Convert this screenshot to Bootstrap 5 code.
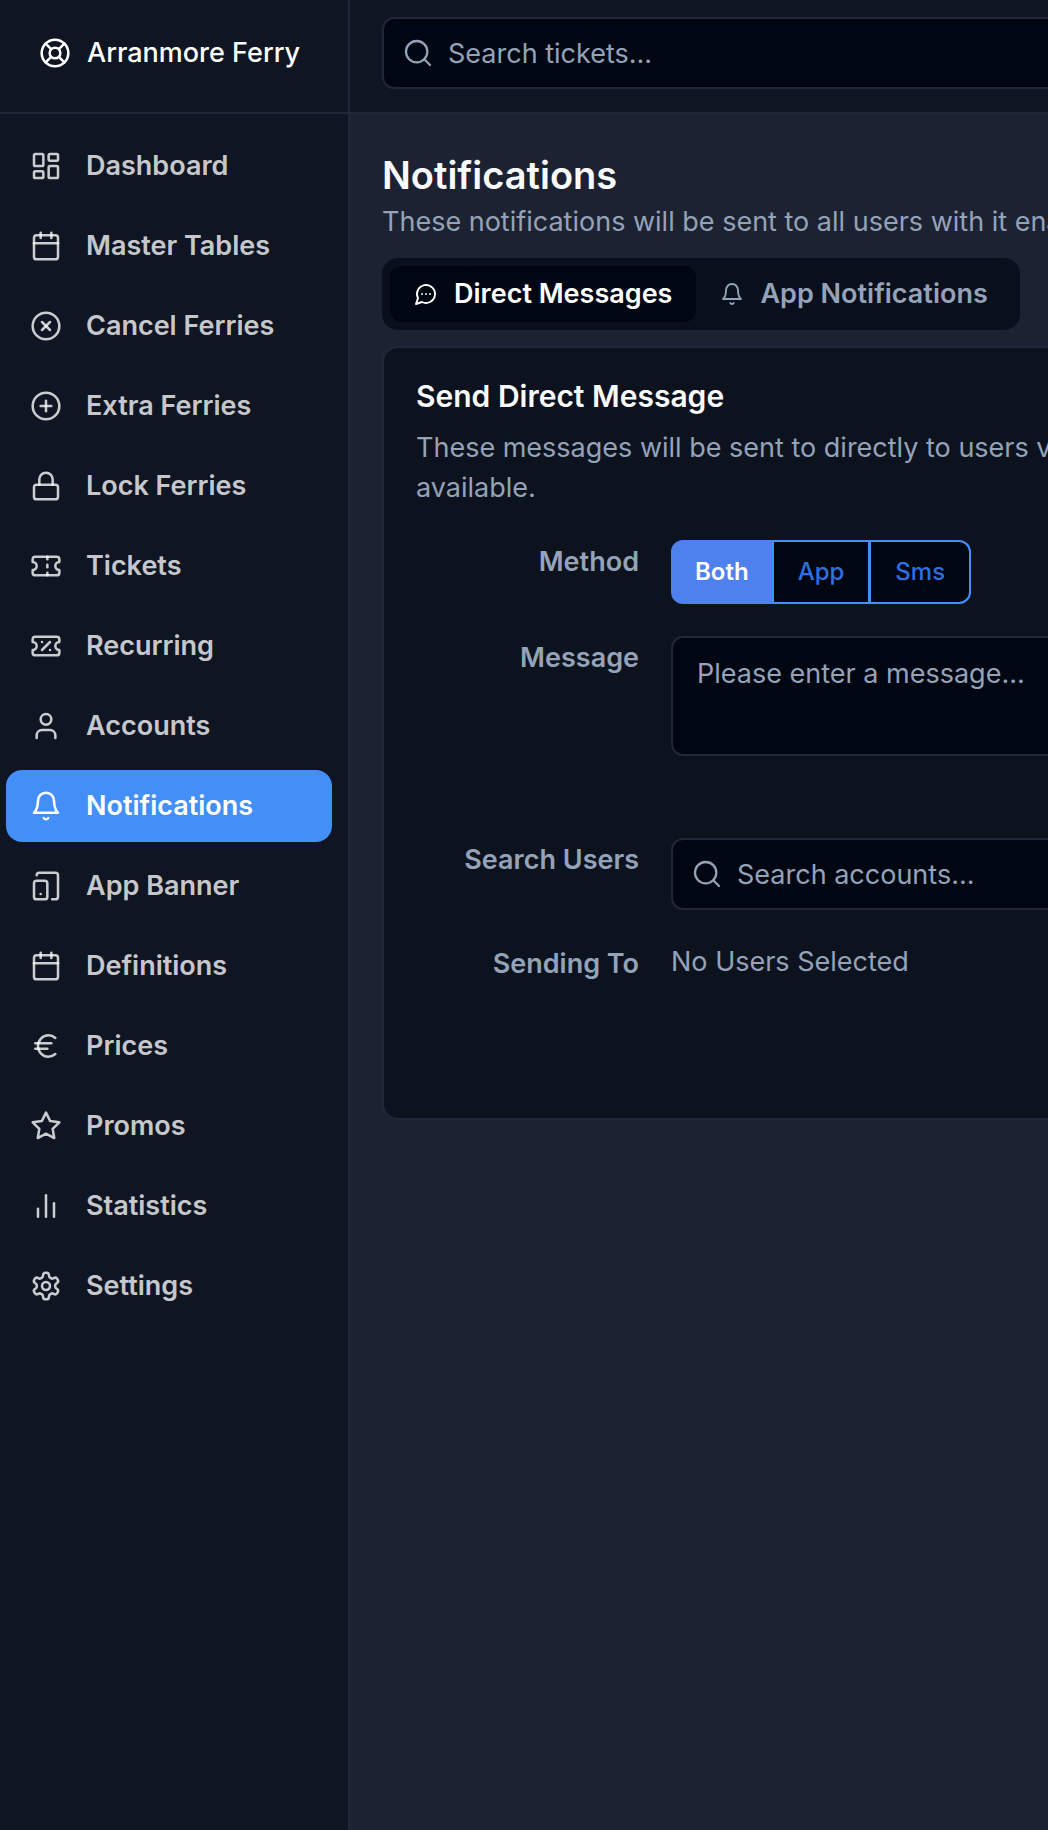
<!DOCTYPE html>
<html lang="en">
<head>
<meta charset="utf-8">
<meta name="viewport" content="width=device-width, initial-scale=1">
<title>Notifications - Arranmore Ferry</title>
<link href="https://cdn.jsdelivr.net/npm/bootstrap@5.3.0/dist/css/bootstrap.min.css" rel="stylesheet">
<style>
  :root {
    --panel: #0f1523;
    --field: #010613;
    --line: #1e2838;
    --muted: #94a3b8;
    --accent: #448ef7;
  }
  body {
    background: #1c2231;
    color: #f8fafc;
    font-family: Inter, "Liberation Sans", sans-serif;
    font-size: 27px;
    line-height: 40px;
    overflow-x: hidden;
  }
  .ico { width: 32px; height: 32px; flex: none; fill: none; stroke: currentColor; stroke-width: 1.9; stroke-linecap: round; stroke-linejoin: round; }
  .ico-sm { width: 24px; height: 24px; }

  .side { width: 350px; background: var(--panel); border-right: 2px solid var(--line); }
  .side-brand, .topbar { height: 114px; border-bottom: 2px solid var(--line); }
  .side-brand { padding: 0 39px 6px; gap: 16px; color: #fff; font-weight: 500; text-decoration: none; white-space: nowrap; }
  .side-nav { padding: 16px 16px 16px 6px; gap: 8px; }
  .side-nav .nav-link { height: 72px; padding: 0 24px; gap: 24px; border-radius: 16px; color: rgba(250, 250, 250, .8); font-weight: 600; }
  .side-nav .nav-link.active { background: var(--accent); color: #fff; }

  .content { min-width: 0; overflow: hidden; }
  .topbar { background: var(--panel); padding: 17px 0 0 32px; }
  .wide { min-width: 1100px; }
  .search { height: 72px; padding: 0 18px; gap: 14px; background: var(--field); border: 2px solid var(--line); border-radius: 12px; color: var(--muted); }
  .search .ico { stroke-width: 1.7; }
  .search input { background: transparent; border: 0; outline: 0; padding: 2px 0 0; color: #f8fafc; }
  .search input::placeholder, .msg::placeholder { color: var(--muted); opacity: 1; }

  .page { padding: 40px 0 32px 32px; }
  .page h1 { font-size: 38px; line-height: 42px; font-weight: 600; margin-bottom: 6px; }
  .soft { color: var(--muted); }

  .tabs { height: 72px; padding: 8px; border-radius: 16px; background: #090f1c; }
  .tabs .nav-link { height: 56px; padding: 0 24px; gap: 16px; border: 0; background: transparent; border-radius: 12px; color: var(--muted); font-weight: 600; white-space: nowrap; }
  .tabs .nav-link.active { background: var(--field); color: #fff; }

  .panel { background: #0d121f; border: 2px solid var(--line); border-radius: 16px; padding: 32px; }
  .panel h2 { font-size: 30px; line-height: 32px; font-weight: 600; }
  .panel .intro { margin-bottom: 32px; }
  .fields { gap: 32px; }
  .field-name { width: 255px; flex: none; padding: 8px 32px 0 0; line-height: 28px; font-weight: 600; text-align: right; color: var(--muted); }
  .row-msg { min-height: 170px; }
  .row-to { min-height: 144px; }
  .msg { height: 120px; padding: 16px 24px; background: var(--field); border: 2px solid var(--line); border-radius: 12px; color: #f8fafc; resize: none; }
  .methods .btn {
    --bs-btn-color: #2f6fe4; --bs-btn-bg: var(--field); --bs-btn-border-color: #4590f8;
    --bs-btn-active-bg: #4f81ee; --bs-btn-active-border-color: #4f81ee; --bs-btn-active-color: #fff;
    --bs-btn-font-size: 24px; --bs-btn-font-weight: 500; --bs-btn-line-height: 28px;
    --bs-btn-padding-x: 24px; --bs-btn-padding-y: 16px; --bs-btn-border-width: 2px; --bs-btn-border-radius: 12px;
  }
  .methods .btn.active { padding-left: 22px; padding-right: 22px; font-weight: 600; z-index: 0; }
  .methods .btn + .btn { margin-left: -2px; }
</style>
<script src="https://cdn.jsdelivr.net/npm/bootstrap@5.3.0/dist/js/bootstrap.bundle.min.js"></script>
</head>
<body>
<div class="d-flex min-vh-100">
  <aside class="side d-flex flex-column flex-shrink-0">
    <a href="#" class="side-brand d-flex align-items-center">
      <svg class="ico" viewBox="0 0 24 24"><circle cx="12" cy="12" r="10"/><path d="m4.93 4.93 4.24 4.24M14.83 9.17l4.24-4.24M14.83 14.83l4.24 4.24M9.17 14.83l-4.24 4.24"/><circle cx="12" cy="12" r="4"/></svg>
      <span>Arranmore Ferry</span>
    </a>
    <nav class="side-nav nav flex-column flex-nowrap">
      <a href="#" class="nav-link d-flex align-items-center"><svg class="ico" viewBox="0 0 24 24"><rect x="3" y="3" width="7" height="9" rx="1"/><rect x="14" y="3" width="7" height="5" rx="1"/><rect x="14" y="12" width="7" height="9" rx="1"/><rect x="3" y="16" width="7" height="5" rx="1"/></svg>Dashboard</a>
      <a href="#" class="nav-link d-flex align-items-center"><svg class="ico" viewBox="0 0 24 24"><rect x="3" y="4" width="18" height="18" rx="2"/><path d="M16 2v4"/><path d="M8 2v4"/><path d="M3 10h18"/></svg>Master Tables</a>
      <a href="#" class="nav-link d-flex align-items-center"><svg class="ico" viewBox="0 0 24 24"><circle cx="12" cy="12" r="10"/><path d="m15 9-6 6"/><path d="m9 9 6 6"/></svg>Cancel Ferries</a>
      <a href="#" class="nav-link d-flex align-items-center"><svg class="ico" viewBox="0 0 24 24"><circle cx="12" cy="12" r="10"/><path d="M8 12h8"/><path d="M12 8v8"/></svg>Extra Ferries</a>
      <a href="#" class="nav-link d-flex align-items-center"><svg class="ico" viewBox="0 0 24 24"><rect x="3" y="11" width="18" height="11" rx="2"/><path d="M7 11V7a5 5 0 0 1 10 0v4"/></svg>Lock Ferries</a>
      <a href="#" class="nav-link d-flex align-items-center"><svg class="ico" viewBox="0 0 24 24"><path d="M2 9a3 3 0 0 1 0 6v2a2 2 0 0 0 2 2h16a2 2 0 0 0 2-2v-2a3 3 0 0 1 0-6V7a2 2 0 0 0-2-2H4a2 2 0 0 0-2 2Z"/><path d="M13 5v2"/><path d="M13 17v2"/><path d="M13 11v2"/></svg>Tickets</a>
      <a href="#" class="nav-link d-flex align-items-center"><svg class="ico" viewBox="0 0 24 24"><path d="M2 9a3 3 0 1 1 0 6v2a2 2 0 0 0 2 2h16a2 2 0 0 0 2-2v-2a3 3 0 1 1 0-6V7a2 2 0 0 0-2-2H4a2 2 0 0 0-2 2Z"/><path d="M9 9h.01"/><path d="m15 9-6 6"/><path d="M15 15h.01"/></svg>Recurring</a>
      <a href="#" class="nav-link d-flex align-items-center"><svg class="ico" viewBox="0 0 24 24"><path d="M19 21v-2a4 4 0 0 0-4-4H9a4 4 0 0 0-4 4v2"/><circle cx="12" cy="7" r="4"/></svg>Accounts</a>
      <a href="#" class="nav-link active d-flex align-items-center" aria-current="page"><svg class="ico" viewBox="0 0 24 24"><path d="M6 8a6 6 0 0 1 12 0c0 7 3 9 3 9H3s3-2 3-9"/><path d="M10.3 21a1.94 1.94 0 0 0 3.4 0"/></svg>Notifications</a>
      <a href="#" class="nav-link d-flex align-items-center"><svg class="ico" viewBox="0 0 24 24"><rect x="3" y="8" width="10" height="14" rx="2"/><path d="M5 4a2 2 0 0 1 2-2h12a2 2 0 0 1 2 2v16a2 2 0 0 1-2 2h-2.4"/><path d="M8 18h.01"/></svg>App Banner</a>
      <a href="#" class="nav-link d-flex align-items-center"><svg class="ico" viewBox="0 0 24 24"><rect x="3" y="4" width="18" height="18" rx="2"/><path d="M16 2v4"/><path d="M8 2v4"/><path d="M3 10h18"/></svg>Definitions</a>
      <a href="#" class="nav-link d-flex align-items-center"><svg class="ico" viewBox="0 0 24 24"><path d="M4 10h12"/><path d="M4 14h9"/><path d="M19 6a7.7 7.7 0 0 0-5.2-2A7.9 7.9 0 0 0 6 12c0 4.4 3.5 8 7.8 8 2 0 3.8-.8 5.2-2"/></svg>Prices</a>
      <a href="#" class="nav-link d-flex align-items-center"><svg class="ico" viewBox="0 0 24 24"><path d="m12 2 3.09 6.26L22 9.27l-5 4.87 1.18 6.88L12 17.77l-6.18 3.25L7 14.14 2 9.27l6.91-1.01z"/></svg>Promos</a>
      <a href="#" class="nav-link d-flex align-items-center"><svg class="ico" viewBox="0 0 24 24"><path d="M18 20V10"/><path d="M12 20V4"/><path d="M6 20v-6"/></svg>Statistics</a>
      <a href="#" class="nav-link d-flex align-items-center"><svg class="ico" viewBox="0 0 24 24"><path d="M12.22 2h-.44a2 2 0 0 0-2 2v.18a2 2 0 0 1-1 1.73l-.43.25a2 2 0 0 1-2 0l-.15-.08a2 2 0 0 0-2.73.73l-.22.38a2 2 0 0 0 .73 2.73l.15.1a2 2 0 0 1 1 1.72v.51a2 2 0 0 1-1 1.74l-.15.09a2 2 0 0 0-.73 2.73l.22.38a2 2 0 0 0 2.73.73l.15-.08a2 2 0 0 1 2 0l.43.25a2 2 0 0 1 1 1.73V20a2 2 0 0 0 2 2h.44a2 2 0 0 0 2-2v-.18a2 2 0 0 1 1-1.73l.43-.25a2 2 0 0 1 2 0l.15.08a2 2 0 0 0 2.73-.73l.22-.39a2 2 0 0 0-.73-2.73l-.15-.08a2 2 0 0 1-1-1.74v-.5a2 2 0 0 1 1-1.74l.15-.09a2 2 0 0 0 .73-2.73l-.22-.38a2 2 0 0 0-2.73-.73l-.15.08a2 2 0 0 1-2 0l-.43-.25a2 2 0 0 1-1-1.73V4a2 2 0 0 0-2-2z"/><circle cx="12" cy="12" r="3"/></svg>Settings</a>
    </nav>
  </aside>

  <div class="content flex-grow-1">
    <header class="topbar">
      <div class="wide">
        <label class="search d-flex align-items-center">
          <svg class="ico" viewBox="0 0 24 24"><circle cx="11" cy="11" r="8"/><path d="m21 21-4.3-4.3"/></svg>
          <input type="search" class="flex-grow-1" placeholder="Search tickets..." aria-label="Search tickets">
        </label>
      </div>
    </header>

    <main class="page">
      <div class="wide">
        <h1>Notifications</h1>
        <p class="soft mb-3 text-nowrap">These notifications will be sent to all users with it enabled.</p>

        <div class="tabs nav d-inline-flex flex-nowrap mb-3" role="tablist">
          <button type="button" class="nav-link active d-flex align-items-center" role="tab" aria-selected="true"><svg class="ico ico-sm" viewBox="0 0 24 24"><path d="M7.9 20A9 9 0 1 0 4 16.1L2 22Z"/><path d="M8 12h.01"/><path d="M12 12h.01"/><path d="M16 12h.01"/></svg>Direct Messages</button>
          <button type="button" class="nav-link d-flex align-items-center" role="tab" aria-selected="false"><svg class="ico ico-sm" viewBox="0 0 24 24"><path d="M6 8a6 6 0 0 1 12 0c0 7 3 9 3 9H3s3-2 3-9"/><path d="M10.3 21a1.94 1.94 0 0 0 3.4 0"/></svg>App Notifications</button>
        </div>

        <section class="panel">
          <h2 class="mb-3">Send Direct Message</h2>
          <p class="intro soft text-nowrap">These messages will be sent to directly to users via app or sms where<br>available.</p>
          <form class="fields d-flex flex-column">
            <div class="d-flex align-items-start">
              <span class="field-name" id="method-name">Method</span>
              <div class="methods btn-group" role="group" aria-labelledby="method-name">
                <button type="button" class="btn active" aria-pressed="true">Both</button>
                <button type="button" class="btn" aria-pressed="false">App</button>
                <button type="button" class="btn" aria-pressed="false">Sms</button>
              </div>
            </div>
            <div class="row-msg d-flex align-items-start">
              <label class="field-name" for="message">Message</label>
              <textarea id="message" class="msg flex-grow-1" placeholder="Please enter a message..."></textarea>
            </div>
            <div class="d-flex align-items-start">
              <label class="field-name" for="accounts">Search Users</label>
              <div class="search d-flex align-items-center flex-grow-1">
                <svg class="ico" viewBox="0 0 24 24"><circle cx="11" cy="11" r="8"/><path d="m21 21-4.3-4.3"/></svg>
                <input type="search" id="accounts" class="flex-grow-1" placeholder="Search accounts...">
              </div>
            </div>
            <div class="row-to d-flex align-items-start">
              <span class="field-name">Sending To</span>
              <span class="soft">No Users Selected</span>
            </div>
          </form>
        </section>
      </div>
    </main>
  </div>
</div>
</body>
</html>
